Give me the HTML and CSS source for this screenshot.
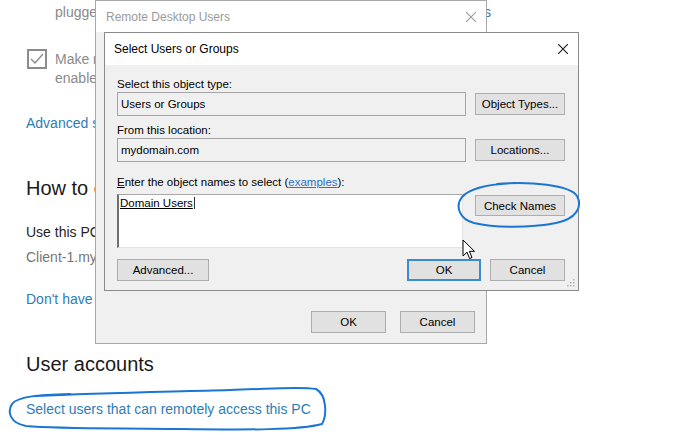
FILE: index.html
```html
<!DOCTYPE html>
<html>
<head>
<meta charset="utf-8">
<title>Select Users or Groups</title>
<link rel="stylesheet" href="styles.css">
</head>
<body>
<main class="settings">
  <div class="check-row first">
    <span class="checkbox"><svg viewBox="0 0 20 20" width="20" height="20"><rect x="1" y="1" width="18" height="18" fill="none" stroke="#8c8c8c" stroke-width="2"/><polyline points="4,10 8,14 16,5" fill="none" stroke="#8c8c8c" stroke-width="1.4"/></svg></span>
    <div class="check-text">
      <div class="with-link"><span>plugged in</span><a class="link">Show settings</a></div>
    </div>
  </div>
  <div class="check-row second">
    <span class="checkbox"><svg viewBox="0 0 20 20" width="20" height="20"><rect x="1" y="1" width="18" height="18" fill="none" stroke="#8c8c8c" stroke-width="2"/><polyline points="4,10 8,14 16,5" fill="none" stroke="#8c8c8c" stroke-width="1.4"/></svg></span>
    <div class="check-text">
      <div>Make my PC discoverable on private networks</div>
      <div>enable automatic connection from a remote</div>
    </div>
  </div>
  <a class="link block advanced">Advanced settings</a>
  <h2 class="heading how">How to connect to this PC</h2>
  <p class="text use">Use this PC name to connect from your remote device:</p>
  <p class="text muted client">Client-1.mydomain.com</p>
  <a class="link block dont">Don't have a Remote Desktop client on your device?</a>
  <h2 class="heading accounts">User accounts</h2>
  <a class="link block select-users">Select users that can remotely access this PC</a>
</main>

<section class="win-outer">
  <div class="titlebar outer-title">
    <span>Remote Desktop Users</span>
    <svg class="close" viewBox="0 0 10 10" width="10" height="10"><path d="M0,0 L10,10 M10,0 L0,10" stroke="#9a9a9a" stroke-width="1.1"/></svg>
  </div>
  <div class="outer-body">
    <button class="btn w75">OK</button>
    <button class="btn w75">Cancel</button>
  </div>
</section>

<section class="win-inner">
  <div class="titlebar inner-title">
    <span>Select Users or Groups</span>
    <svg class="close" viewBox="0 0 10 10" width="10" height="10"><path d="M0,0 L10,10 M10,0 L0,10" stroke="#222" stroke-width="1.2"/></svg>
  </div>
  <div class="inner-body">
    <div class="field-label">Select this object type:</div>
    <div class="field-row">
      <div class="field-box">Users or Groups</div>
      <button class="btn w90">Object Types...</button>
    </div>
    <div class="field-label gap6">From this location:</div>
    <div class="field-row">
      <div class="field-box">mydomain.com</div>
      <button class="btn w90">Locations...</button>
    </div>
    <div class="field-label gap12"><u>E</u>nter the object names to select (<a class="dlg-link">examples</a>):</div>
    <div class="field-row top gap4">
      <div class="names-box"><span class="name">Domain Users</span></div>
      <button class="btn w90 check">Check Names</button>
    </div>
    <div class="button-row">
      <button class="btn w92">Advanced...</button>
      <div class="ok-cancel">
        <button class="btn w74 default">OK</button>
        <button class="btn w75">Cancel</button>
      </div>
    </div>
  </div>
  <svg class="grip" viewBox="0 0 9 9" width="9" height="9"><g fill="#b5b5b5"><rect x="7" y="1" width="1.5" height="1.5"/><rect x="4" y="4" width="1.5" height="1.5"/><rect x="7" y="4" width="1.5" height="1.5"/><rect x="1" y="7" width="1.5" height="1.5"/><rect x="4" y="7" width="1.5" height="1.5"/><rect x="7" y="7" width="1.5" height="1.5"/></g></svg>
</section>

<svg class="cursor" viewBox="0 0 14 21" width="14" height="21"><path d="M1,1 L1,17 L5,13.2 L7.6,19.5 L10,18.5 L7.4,12.3 L12.5,12.3 Z" fill="#fff" stroke="#000" stroke-width="1" stroke-linejoin="miter"/></svg>

<svg class="annotations" viewBox="0 0 673 441" width="673" height="441">
  <path d="M497,184 C530,181 570,185 577,196 C583,207 576,219 556,223 C530,228 495,228 474,223 C459,219 455,206 462,197 C470,188 488,184 515,183" fill="none" stroke="#1a76d2" stroke-width="2" stroke-linecap="round"/>
  <path d="M36,396 C100,393 160,392 230,390 C270,389 300,386 316,389 C327,395 327,415 322,424 C300,430 250,430 180,429 C120,428 60,429 26,426 C10,423 7,412 12,404 C18,396 40,395 70,394" fill="none" stroke="#1a76d2" stroke-width="2" stroke-linecap="round"/>
</svg>
</body>
</html>
```
FILE: styles.css
```css
html, body {
  margin: 0;
  padding: 0;
  background: #ffffff;
}
body {
  width: 673px;
  height: 441px;
  overflow: hidden;
  position: relative;
  font-family: "Liberation Sans", Arial, sans-serif;
}

/* background settings page */
.settings {
  padding-left: 26px;
  font-size: 14px;
  line-height: 20px;
  color: #1f1f1f;
}
.check-row {
  display: flex;
  gap: 8px;
  line-height: 19px;
  color: #8a8a8a;
  white-space: nowrap;
}
.check-row.first { margin-top: -19px; }
.check-row.first .check-text { padding-top: 22px; }
.check-row.second { margin-top: 28px; }
.checkbox {
  width: 20px;
  height: 20px;
  flex: none;
  margin-left: 1px;
  margin-top: -1px;
}
.checkbox svg { display: block; }
.with-link {
  width: 436px;
  display: flex;
  justify-content: space-between;
}
.link {
  color: #2d7db5;
  text-decoration: none;
}
.link.block { display: block; }
.advanced { margin-top: 25px; }
.heading {
  margin: 0;
  font-size: 20px;
  line-height: 26px;
  font-weight: normal;
  color: #1a1a1a;
}
.how { margin-top: 42px; }
.text { margin: 0; }
.use { margin-top: 21px; }
.muted { color: #767676; }
.client { margin-top: 5px; }
.dont { margin-top: 22px; }
.accounts { margin-top: 42px; }
.select-users { margin-top: 22px; }

/* windows */
.win-outer {
  position: absolute;
  left: 95px;
  top: 0;
  width: 390px;
  height: 342px;
  border: 1px solid #a8a8a8;
  background: #f0f0f0;
  display: flex;
  flex-direction: column;
}
.titlebar {
  background: #ffffff;
  display: flex;
  align-items: center;
  justify-content: space-between;
  flex: none;
}
.outer-title {
  height: 31px;
  padding: 0 10px;
  color: #9a9a9a;
  font-size: 12px;
}
.close { display: block; }
.outer-body {
  flex: 1;
  display: flex;
  justify-content: flex-end;
  align-items: flex-end;
  gap: 14px;
  padding: 0 11px 10px 0;
}

.win-inner {
  position: absolute;
  left: 104px;
  top: 32px;
  width: 473px;
  height: 257px;
  border: 1px solid #8a8a8a;
  background: #f0f0f0;
  display: flex;
  flex-direction: column;
}
.inner-title {
  height: 32px;
  padding: 0 10px 0 9px;
  color: #000000;
  font-size: 12px;
}
.inner-body {
  flex: 1;
  padding: 11px 13px 8px 12px;
  font-size: 11.5px;
  color: #000;
  display: flex;
  flex-direction: column;
}
.field-label {
  height: 16px;
  line-height: 16px;
}
.gap6 { margin-top: 6px; }
.gap12 { margin-top: 12px; }
.gap4 { margin-top: 4px; }
.field-row {
  display: flex;
  align-items: center;
  justify-content: space-between;
}
.field-row.top { align-items: flex-start; }
.field-box {
  width: 349px;
  height: 24px;
  box-sizing: border-box;
  border: 1px solid #a5a5a5;
  background: #f0f0f0;
  padding: 0 3px;
  line-height: 22px;
}
.names-box {
  width: 346px;
  height: 54px;
  box-sizing: border-box;
  background: #ffffff;
  border-top: 1px solid #a8a8a8;
  border-left: 2px solid #6f6f6f;
  border-right: 1px solid #e3e3e3;
  border-bottom: 1px solid #e3e3e3;
  padding: 1px 1px;
  line-height: 15px;
}
.name {
  text-decoration: underline;
  border-right: 1px solid #333;
  padding-right: 1px;
}
.dlg-link {
  color: #2b6fc6;
  text-decoration: underline;
}
.btn {
  height: 22px;
  box-sizing: border-box;
  border: 1px solid #adadad;
  background: #e1e1e1;
  font-family: "Liberation Sans", Arial, sans-serif;
  font-size: 11.5px;
  color: #000;
  padding: 0;
}
.btn.check { margin-top: 1px; height: 21px; }
.w90 { width: 90px; }
.w92 { width: 92px; }
.w74 { width: 74px; }
.w75 { width: 75px; }
.btn.default { border: 2px solid #3a8bd0; }
.button-row {
  margin-top: 11px;
  display: flex;
  justify-content: space-between;
}
.ok-cancel {
  display: flex;
  gap: 9px;
}
.grip {
  position: absolute;
  right: 3px;
  bottom: 3px;
}

/* overlays */
.cursor {
  position: absolute;
  left: 462px;
  top: 239px;
}
.annotations {
  position: absolute;
  left: 0;
  top: 0;
  pointer-events: none;
}
```
